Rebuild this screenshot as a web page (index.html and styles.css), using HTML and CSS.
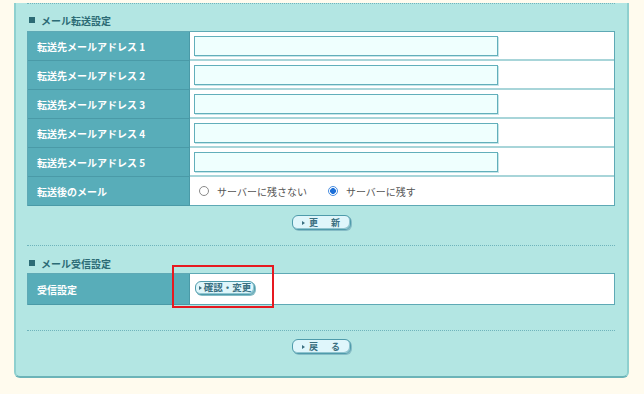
FILE: index.html
```html
<!DOCTYPE html>
<html lang="ja">
<head>
<meta charset="utf-8">
<title>メール設定</title>
<link rel="stylesheet" href="styles.css">
</head>
<body>
<div class="panel">
  <div class="sep sep-first"></div>
  <h2 class="heading"><span class="sq"></span>メール転送設定</h2>
  <table class="form-table">
    <colgroup><col class="col-label"><col></colgroup>
    <tr><th>転送先メールアドレス 1</th><td><input class="addr" type="text"></td></tr>
    <tr><th>転送先メールアドレス 2</th><td><input class="addr" type="text"></td></tr>
    <tr><th>転送先メールアドレス 3</th><td><input class="addr" type="text"></td></tr>
    <tr><th>転送先メールアドレス 4</th><td><input class="addr" type="text"></td></tr>
    <tr><th>転送先メールアドレス 5</th><td><input class="addr" type="text"></td></tr>
    <tr><th>転送後のメール</th><td>
      <div class="radios">
        <span class="opt"><span class="radio"></span>サーバーに残さない</span>
        <span class="opt"><span class="radio on"></span>サーバーに残す</span>
      </div>
    </td></tr>
  </table>
  <div class="actions act-1"><span class="btn"><span class="tri"></span>更<span class="gap"></span>新</span></div>

  <div class="sep sep-2"></div>
  <h2 class="heading heading-2"><span class="sq"></span>メール受信設定</h2>
  <div class="box-wrap">
    <table class="form-table table-2">
      <colgroup><col class="col-label"><col></colgroup>
      <tr><th>受信設定</th><td><div class="cell-flex"><span class="btn btn-small"><span class="tri"></span>確認・変更</span></div></td></tr>
    </table>
    <div class="highlight"></div>
  </div>

  <div class="sep sep-3"></div>
  <div class="actions act-2"><span class="btn"><span class="tri"></span>戻<span class="gap"></span>る</span></div>
</div>
</body>
</html>
```

FILE: styles.css
```css
html, body {
  margin: 0;
  padding: 0;
  background: #fffbee;
  font-family: "Noto Sans CJK JP", "Noto Sans", sans-serif;
}

.panel {
  margin-left: 14px;
  width: 588px;
  padding: 0 12px 22px 11px;
  background: #b3e6e3;
  border: 2px solid #8fd0cf;
  border-top: none;
  border-bottom-color: #6cb4b8;
  border-radius: 0 0 6px 6px;
}

.sep {
  border-top: 1px dotted #6fb4bc;
}
.sep-first { margin-top: 3px; }
.sep-2 { margin-top: 15px; }
.sep-3 { margin-top: 25px; }

.heading {
  display: flex;
  align-items: center;
  margin: 9px 0 4px 0;
  height: 14px;
  font-size: 10px;
  font-weight: bold;
  color: #2c6b75;
}
.heading-2 { margin: 10px 0 3px 0; }

.sq {
  width: 6px;
  height: 6px;
  background: #2c6b75;
  margin: 0 6px 0 2px;
}

.form-table {
  width: 588px;
  table-layout: fixed;
  border-collapse: separate;
  border-spacing: 0;
  border: 1px solid #5ea9b5;
  border-bottom: none;
}
.col-label { width: 162px; }

.form-table th {
  height: 28px;
  padding: 0 0 0 9px;
  background: #58adb9;
  color: #fff;
  font-size: 10px;
  font-weight: bold;
  text-align: left;
  border-right: 1px solid #4a9aa7;
  border-bottom: 1px solid #4a9aa7;
}

.form-table td {
  height: 27px;
  padding: 0 0 0 4px;
  background: #fff;
  vertical-align: middle;
  border-bottom: 2px solid #a8d5d9;
}
.form-table tr:last-child td {
  height: 28px;
  border-bottom: 1px solid #5ea9b5;
}

.table-2 th { height: 30px; }
.table-2 tr:last-child td { height: 30px; }

.cell-flex {
  display: flex;
  align-items: center;
  padding-bottom: 2px;
}

.addr {
  display: block;
  box-sizing: border-box;
  width: 304px;
  height: 20px;
  margin: 0;
  border: 1px solid #62afbb;
  background: #effffe;
  box-shadow: 1px 1px 0 #c6e6e9;
  padding: 0;
}

.radios {
  display: flex;
  align-items: center;
  font-size: 10px;
  color: #555;
  padding-left: 5px;
}
.opt {
  display: flex;
  align-items: center;
  margin-right: 21px;
}
.radio {
  box-sizing: border-box;
  width: 10px;
  height: 10px;
  border: 1px solid #8a8a8a;
  border-radius: 50%;
  background: #fff;
  margin-right: 8px;
}
.radio.on {
  border-color: #4b8ee0;
  background: radial-gradient(circle, #1c6fd8 0 2.6px, #fff 3.2px);
}

.actions {
  display: flex;
  justify-content: center;
}
.act-1 { margin-top: 9px; }
.act-2 { margin-top: 8px; }

.btn {
  box-sizing: border-box;
  display: inline-flex;
  align-items: center;
  justify-content: center;
  width: 59px;
  height: 15px;
  border: 1px solid #4e9bab;
  border-radius: 6px;
  background: #dff6fb;
  box-shadow: inset -1px -1px 0 #8fc4cf, 1px 1px 0 #86bcc6;
  font-size: 9px;
  font-weight: bold;
  color: #3a6f80;
  line-height: 1;
}
.btn-small {
  width: 60px;
  height: 14px;
  font-size: 9.5px;
  margin-left: 1px;
}
.tri {
  width: 0;
  height: 0;
  border-left: 3px solid #3a6f80;
  border-top: 2.5px solid transparent;
  border-bottom: 2.5px solid transparent;
  margin-right: 4px;
}
.btn-small .tri { margin-right: 2px; }
.gap { display: inline-block; width: 13px; }

.box-wrap { position: relative; }
.highlight {
  position: absolute;
  left: 145px;
  top: -8px;
  width: 98px;
  height: 39px;
  border: 2px solid #e61920;
}
```
